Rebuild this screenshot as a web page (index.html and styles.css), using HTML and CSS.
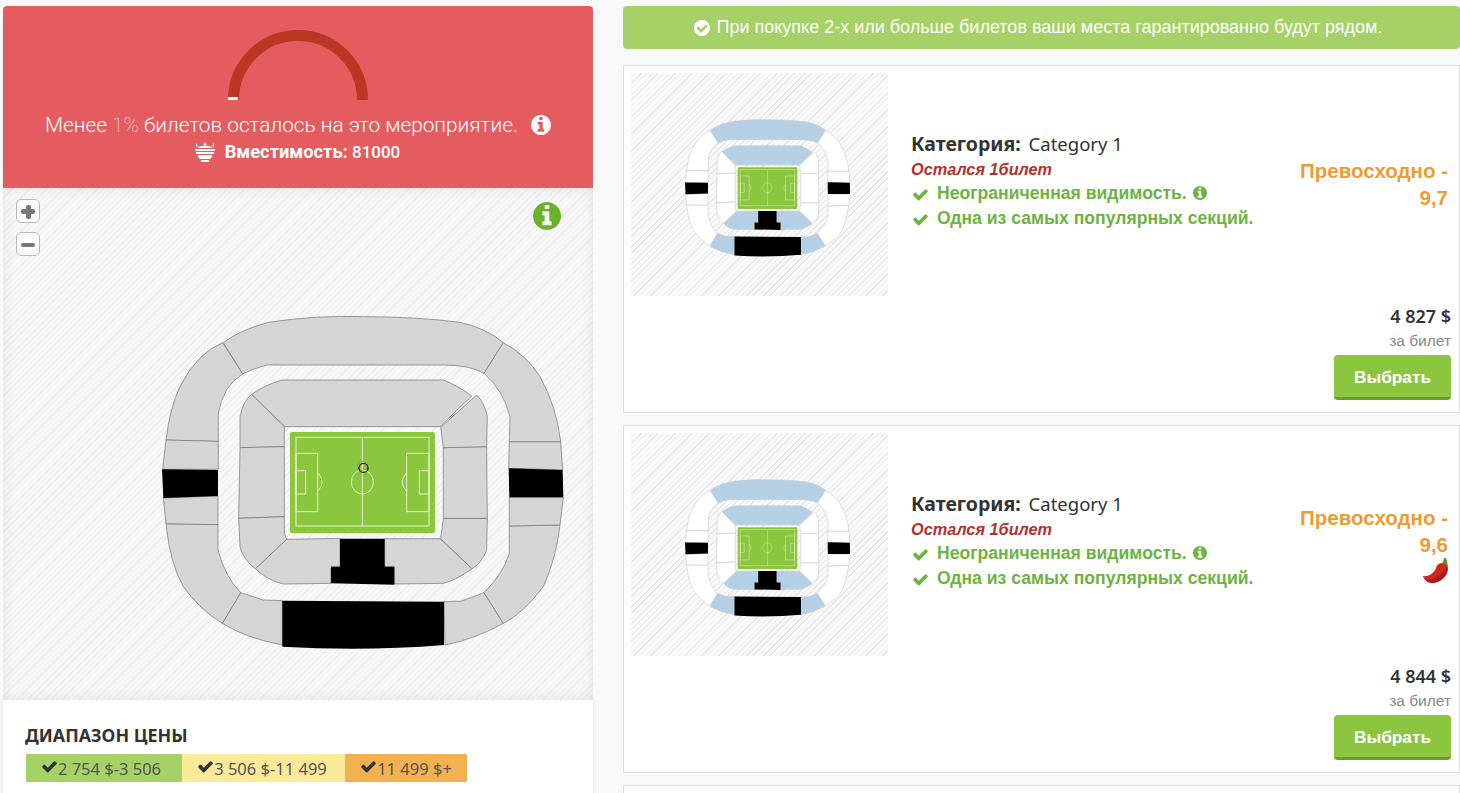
FILE: index.html
```html
<!DOCTYPE html>
<html lang="ru">
<head>
<meta charset="utf-8">
<title>Билеты</title>
<link rel="stylesheet" href="styles.css">
</head>
<body>
<svg class="defs" width="0" height="0" aria-hidden="true">
  <symbol id="i-check" viewBox="0 0 1792 1792"><path d="M1671 566q0 40-28 68l-724 724-136 136q-28 28-68 28t-68-28l-136-136-362-362q-28-28-28-68t28-68l136-136q28-28 68-28t68 28l294 295 656-657q28-28 68-28t68 28l136 136q28 28 28 68z"/></symbol>
  <symbol id="i-info" viewBox="128 128 1536 1536"><path d="M1152 1376v-160q0-14-9-23t-23-9h-96v-512q0-14-9-23t-23-9h-320q-14 0-23 9t-9 23v160q0 14 9 23t23 9h96v320h-96q-14 0-23 9t-9 23v160q0 14 9 23t23 9h448q14 0 23-9t9-23zm-128-896v-160q0-14-9-23t-23-9h-192q-14 0-23 9t-9 23v160q0 14 9 23t23 9h192q14 0 23-9t9-23zm640 416q0 209-103 385.5t-279.5 279.5-385.5 103-385.5-103-279.5-279.5-103-385.5 103-385.5 279.5-279.5 385.5-103 385.5 103 279.5 279.5 103 385.5z"/></symbol>
  <symbol id="i-check-circle" viewBox="128 128 1536 1536"><path d="M1412 734q0-28-18-46l-91-90q-19-19-45-19t-45 19l-408 407-226-226q-19-19-45-19t-45 19l-91 90q-18 18-18 46 0 27 18 45l362 362q19 19 45 19 27 0 46-19l543-543q18-18 18-45zm252 162q0 209-103 385.5t-279.5 279.5-385.5 103-385.5-103-279.5-279.5-103-385.5 103-385.5 279.5-279.5 385.5-103 385.5 103 279.5 279.5 103 385.5z"/></symbol>
  <symbol id="stadium" viewBox="0 0 1290 1050">
    <g class="sec sec-a">
      <path d="M220 98Q270 60 355 37Q500 15 640 20Q800 20 930 37Q1010 55 1060 98L1002 190Q960 165 880 165L350 165Q310 175 278 192Z"/>
      <path d="M305 253Q345 225 395 210L880 210Q930 230 965 258L870 350L405 350Z"/>
      <path d="M316 776L410 688L570 685L570 770L543 770L543 820L400 822Q350 810 316 776Z"/>
      <path d="M704 686L870 686L966 776Q920 810 880 820L733 822L733 770L704 770Z"/>
      <path d="M272 848L340 870L397 872L397 1005Q290 985 217 940Z"/>
      <path d="M882 875L935 873L1002 848L1060 940Q980 985 885 1005Z"/>
    </g>
    <g class="sec sec-b">
      <path d="M218 98L278 192Q220 225 205 310L205 394L48 390Q60 290 90 230Q140 130 218 98Z"/>
      <path d="M48 390L205 394L205 478L38 478Z"/>
      <path d="M40 564L204 558L204 644L48 642Z"/>
      <path d="M48 642L204 644L204 720Q225 800 272 848L217 940Q150 900 100 830Q60 760 48 642Z"/>
      <path d="M1002 848Q1060 790 1078 730L1078 648L1230 645Q1220 740 1180 830Q1120 910 1060 940Z"/>
      <path d="M1078 562L1240 562L1230 645L1078 648Z"/>
      <path d="M1078 395L1232 395L1238 480L1076 475Z"/>
      <path d="M1060 98Q1130 135 1170 200Q1220 290 1232 395L1078 395L1080 320Q1060 240 1002 190Z"/>
      <path d="M305 253L403 350L403 410L270 413L270 320Q280 270 305 253Z"/>
      <path d="M270 413L403 410L403 620L266 625Z"/>
      <path d="M266 625L403 620L403 670L410 688L316 776Q280 750 270 710Z"/>
      <path d="M872 686L880 625L1012 625L1010 720Q995 760 966 776Z"/>
      <path d="M880 413L1010 410L1012 625L880 625Z"/>
      <path d="M872 352L980 255Q1005 280 1012 320L1010 410L880 413Z"/>
    </g>
    <g class="sec-black">
      <path d="M36 478L204 480L204 558L40 564Z"/>
      <path d="M1076 475L1238 480L1240 562L1078 562Z"/>
      <path d="M397 872L882 875L882 1005Q640 1025 397 1010Z"/>
      <path d="M570 686L704 686L704 770L733 770L733 824L543 820L543 770L570 770Z"/>
    </g>
    <rect class="pitch" x="420" y="366" width="435" height="304" rx="6"/>
    <g class="pitch-lines">
      <rect x="438" y="382" width="399" height="266"/>
      <path d="M637 382V648"/>
      <ellipse cx="637" cy="516" rx="33" ry="36"/>
      <rect x="438" y="430" width="65" height="175"/>
      <rect x="438" y="482" width="29" height="70"/>
      <path d="M503 488Q530 516 503 544"/>
      <rect x="770" y="430" width="67" height="175"/>
      <rect x="808" y="482" width="29" height="70"/>
      <path d="M770 488Q743 516 770 544"/>
    </g>
  </symbol>
</svg>

<div class="page">
  <aside class="left">
    <section class="hero">
      <svg class="gauge" viewBox="0 0 140 71" width="140" height="71">
        <path class="gauge-arc" d="M5.5 71A64.5 64.5 0 0 1 134.500 71"/>
        <rect class="gauge-tick" x="0" y="68" width="10" height="3"/>
      </svg>
      <p class="hero-text">
        <span>Менее <span class="thin">1%</span> билетов осталось на это мероприятие.</span>
        <svg class="hero-info"><use href="#i-info"/></svg>
      </p>
      <p class="capacity">
        <svg class="capacity-icon" viewBox="0 0 20 20">
          <path d="M1 1l2 3-2 1zM19 1l-2 3 2 1zM10 0l1.500 3h-3zM3 5Q10 2 17 5v1H3zM0 7h20v2H0zM1 10h18v2H1zM3 13h14v2l-2 2H5l-2-2zM6 18h8v2H6z"/>
        </svg>
        <span class="capacity-text"><b>Вместимость:</b> 81000</span>
      </p>
    </section>
    <section class="map">
      <div class="zoom-controls">
        <span class="zoom-btn"><span class="plus"></span></span>
        <span class="zoom-btn"><span class="minus"></span></span>
      </div>
      <svg class="map-info"><use href="#i-info"/></svg>
      <div class="map-stage">
        <svg class="map-svg"><use href="#stadium"/></svg>
        <svg class="marker" viewBox="0 0 16 16"><circle class="marker-a" cx="7" cy="6" r="4.500"/><circle class="marker-b" cx="8.500" cy="8" r="4.500"/></svg>
      </div>
    </section>
    <section class="range">
      <h2 class="range-title">ДИАПАЗОН ЦЕНЫ</h2>
      <div class="pills">
        <span class="pill pill-green"><svg class="pill-check"><use href="#i-check"/></svg>2 754 $-3 506</span>
        <span class="pill pill-yellow"><svg class="pill-check"><use href="#i-check"/></svg>3 506 $-11 499</span>
        <span class="pill pill-orange"><svg class="pill-check"><use href="#i-check"/></svg>11 499 $+</span>
      </div>
    </section>
  </aside>

  <main class="right">
    <div class="alert"><svg class="alert-icon"><use href="#i-check-circle"/></svg>При покупке 2-х или больше билетов ваши места гарантированно будут рядом.</div>

    <article class="card">
      <div class="card-top">
        <div class="thumb"><svg class="thumb-svg"><use href="#stadium"/></svg></div>
        <div class="info">
          <h3 class="cat"><b>Категория:</b> Category 1</h3>
          <p class="left-one">Остался 1билет</p>
          <p class="feature"><svg class="feature-check"><use href="#i-check"/></svg>Неограниченная видимость.<svg class="feature-info"><use href="#i-info"/></svg></p>
          <p class="feature"><svg class="feature-check"><use href="#i-check"/></svg>Одна из самых популярных секций.</p>
        </div>
        <div class="rating">Превосходно - 9,7</div>
      </div>
      <div class="buy">
        <div class="price">4 827 $</div>
        <div class="per">за билет</div>
        <button class="select" type="button">Выбрать</button>
      </div>
    </article>

    <article class="card">
      <div class="card-top">
        <div class="thumb"><svg class="thumb-svg"><use href="#stadium"/></svg></div>
        <div class="info">
          <h3 class="cat"><b>Категория:</b> Category 1</h3>
          <p class="left-one">Остался 1билет</p>
          <p class="feature"><svg class="feature-check"><use href="#i-check"/></svg>Неограниченная видимость.<svg class="feature-info"><use href="#i-info"/></svg></p>
          <p class="feature"><svg class="feature-check"><use href="#i-check"/></svg>Одна из самых популярных секций.</p>
        </div>
        <div class="rating">Превосходно - 9,6
          <svg class="chili" viewBox="0 0 26 25">
            <path class="chili-body" d="M0 18C6 19 11 15 13 10C14 6 17 5 20 5C23 5 25 7 25 11C25 18 17 25 9 25C5 25 1 22 0 18Z"/>
            <path class="chili-shade" d="M2 21C8 23 18 19 24 9C26 17 17 25 9 25C6 25 3.500 23.500 2 21Z"/>
            <path class="chili-stem" d="M17 6C19 5 21 4 21 0L23 0C24 3 24.500 5 25 9C23 6 20 5 17 6Z"/>
          </svg>
        </div>
      </div>
      <div class="buy">
        <div class="price">4 844 $</div>
        <div class="per">за билет</div>
        <button class="select" type="button">Выбрать</button>
      </div>
    </article>

    <article class="card"></article>
  </main>
</div>
</body>
</html>
```
FILE: styles.css
```css
* { box-sizing: border-box; }
html, body { margin: 0; height: 793px; overflow: hidden; }
body { background: #f9f9f9; font-family: "Liberation Sans", Arial, sans-serif; color: #333; }
.defs { position: absolute; }
p, h2, h3 { margin: 0; }

.page { display: flex; gap: 30px; height: 793px; overflow: hidden; padding: 6px 0 0 3px; }
.left { width: 590px; flex: none; }
.right { flex: 1; min-width: 0; display: flex; flex-direction: column; gap: 12px; }

/* hero */
.hero { height: 182px; background: #e45c60; border-radius: 4px 4px 0 0; color: #fff; display: flex; flex-direction: column; align-items: center; padding-top: 23px; }
.gauge { display: block; margin-left: -1px; }
.gauge-arc { fill: none; stroke: #b93824; stroke-width: 11; }
.gauge-tick { fill: #fff; }
.hero-text { display: flex; align-items: center; gap: 13px; font-family: Roboto, sans-serif; font-weight: 300; font-size: 20.800px; line-height: 24px; margin-top: 13px; white-space: nowrap; }
.thin { opacity: .85; font-weight: 100; }
.hero-info { width: 20px; height: 20px; fill: #fff; }
.capacity { display: flex; align-items: center; font-family: Roboto, sans-serif; font-size: 17px; line-height: 20px; margin-top: 5px; font-weight: 500; margin-left: -1px; }
.capacity b { font-size: 18.300px; font-weight: 700; }
.capacity-icon { width: 20px; height: 20px; fill: #fff; margin-right: 10px; }

/* map */
.map { position: relative; height: 512px; padding: 122px 0 0 147px; box-shadow: inset 0 0 14px rgba(0,0,0,.09); background: repeating-linear-gradient(135deg, #f8f8f8 0, #f8f8f8 3px, #eeeeee 3px, #eeeeee 4px); }
.map-stage { position: relative; width: 430px; height: 350px; }
.map-svg { display: block; width: 430px; height: 350px; --sec-a: #d5d5d5; --sec-b: #d5d5d5; --sec-line: #6f6f6f; --sec-w: 2px; }
.sec { stroke: var(--sec-line); stroke-width: var(--sec-w); }
.sec-a { fill: var(--sec-a); }
.sec-b { fill: var(--sec-b); }
.sec-black { fill: #000; }
.pitch { fill: #8cc63f; }
.pitch-lines { fill: none; stroke: #e4f2cf; stroke-width: 3px; }
.marker { position: absolute; left: 205px; top: 150px; width: 16px; height: 16px; }
.marker-a { fill: none; stroke: #b59a4a; stroke-width: 1; }
.marker-b { fill: none; stroke: #111; stroke-width: 1.200; }
.zoom-controls { position: absolute; left: 13px; top: 11px; display: flex; flex-direction: column; gap: 9px; }
.zoom-btn { position: relative; display: block; width: 24px; height: 24px; background: #fcfcfc; border: 1px solid #bbb; border-radius: 5px; }
.plus, .minus { position: absolute; left: 4px; top: 9.500px; width: 14px; height: 4px; border-radius: 2px; background: #777; }
.plus { height: 5px; top: 9px; }
.plus::after { content: ""; position: absolute; left: 4.500px; top: -4.500px; width: 5px; height: 14px; border-radius: 2px; background: #777; }
.map-info { position: absolute; left: 530px; top: 14px; width: 28px; height: 28px; fill: #6db02a; }

/* price range */
.range { background: #fff; height: 120px; padding: 24px 22px 0; box-shadow: 0 0 4px rgba(0,0,0,.12); }
.range-title { font-size: 17.800px; line-height: 22px; font-weight: 700; color: #333; font-family: "Noto Sans", sans-serif; }
.pills { display: flex; margin: 8px 0 0 1px; }
.pill { display: flex; align-items: center; justify-content: center; height: 28px; font-family: "Noto Sans", sans-serif; font-size: 16.500px; color: #555; }
.pill-green { width: 156px; background: #a5d166; padding-right: 6px; }
.pill-yellow { width: 163px; background: #fde99a; padding-right: 3px; }
.pill-orange { width: 122px; background: #f2b04e; }
.pill-check { width: 17px; height: 17px; fill: #333; margin-top: -3px; }

/* right column */
.alert { height: 43px; flex: none; background: #a5d166; border-radius: 4px; color: #fff; display: flex; align-items: center; justify-content: center; padding-right: 7px; font-size: 18px; margin-bottom: 4px; }
.alert-icon { width: 16px; height: 16px; fill: #fff; margin-right: 7px; }
.card { height: 348px; flex: none; background: #fff; border: 1px solid #ddd; padding: 7px 8px 0 7px; }
.card-top { display: flex; align-items: center; height: 223px; }
.thumb { width: 257px; height: 223px; flex: none; align-self: flex-start; padding: 44px 0 0 49px; background: repeating-linear-gradient(135deg, #fafafa 0, #fafafa 3px, #e8e8e8 3px, #e8e8e8 4px); }
.thumb-svg { display: block; width: 177px; height: 144px; --sec-a: #b5cfe4; --sec-b: #fff; --sec-line: #cfcfcf; --sec-w: 5px; }
.info { margin-left: 23px; padding-bottom: 8px; flex: 1; min-width: 0; }
.cat { font-family: "Noto Sans", sans-serif; font-size: 18.500px; line-height: 26px; font-weight: 400; color: #333; }
.cat b { font-size: 19.500px; font-weight: 700; margin-right: 3px; }
.left-one { font-size: 16.300px; line-height: 24px; font-weight: 700; font-style: italic; color: #b5302a; }
.feature { display: flex; align-items: center; font-size: 17.600px; line-height: 25px; font-weight: 700; color: #6db33f; white-space: nowrap; }
.feature-check { width: 17px; height: 17px; fill: #6db33f; margin: 2px 8px 0 1px; }
.feature-info { width: 14px; height: 14px; fill: #6db33f; margin-left: 6px; }
.rating { width: 152px; flex: none; margin: 0 3px 2px 0; text-align: right; font-size: 20.500px; line-height: 27px; font-weight: 700; color: #ee9b35; }
.chili { display: block; width: 26px; height: 25px; margin: 0 -1px 0 auto; }
.chili-body { fill: #d3241f; }
.chili-shade { fill: #a81c1a; }
.chili-stem { fill: #5f8f2a; }
.buy { display: flex; flex-direction: column; align-items: flex-end; margin-top: 7px; }
.price { font-family: "Noto Sans", sans-serif; font-size: 18px; line-height: 26px; font-weight: 600; color: #333; }
.per { font-size: 15.500px; line-height: 24px; color: #888; }
.select { width: 117px; height: 45px; margin-top: 2px; padding-top: 4px; border: 0; border-bottom: 3px solid #6a9e2c; border-radius: 4px; background: #8cc63f; color: #fff; font-family: "Liberation Sans", Arial, sans-serif; font-size: 17.300px; font-weight: 700; }
```
